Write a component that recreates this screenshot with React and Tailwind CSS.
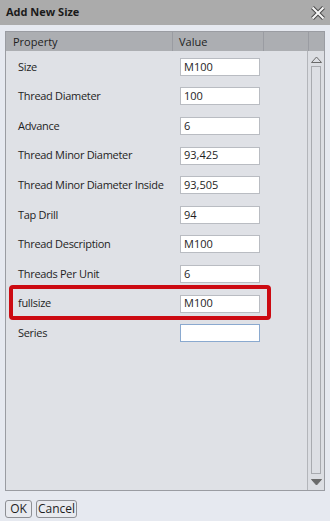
import React from "react";

const rows = [
  { label: "Size", value: "M100" },
  { label: "Thread Diameter", value: "100" },
  { label: "Advance", value: "6" },
  { label: "Thread Minor Diameter", value: "93,425" },
  { label: "Thread Minor Diameter Inside", value: "93,505" },
  { label: "Tap Drill", value: "94" },
  { label: "Thread Description", value: "M100" },
  { label: "Threads Per Unit", value: "6" },
  { label: "fullsize", value: "M100", highlight: true },
  { label: "Series", value: "", focused: true },
];

const Row = ({ label, value, highlight, focused }) => (
  <div className="relative flex h-[29.6px] items-center">
    {highlight && (
      <div className="absolute left-[3px] right-[36px] top-[-4px] bottom-[-2px] rounded-[4px] border-[4px] border-[#cc0a12]" />
    )}
    <div className="w-[174px] whitespace-nowrap pl-[12px] tracking-[-0.3px] text-[#1e1e1e]">{label}</div>
    <div
      className={
        "flex h-[18px] w-[80px] items-center bg-white pl-[3px] text-[#1e1e1e] border " +
        (focused ? "border-[#8aa9cf]" : "border-[#b9bcc2]")
      }
    >
      {value}
    </div>
  </div>
);

export default function App() {
  return (
    <div
      className="flex h-[521px] w-[330px] flex-col bg-[#e6e9f0] text-[11px]"
      style={{ fontFamily: '"Segoe UI", "Open Sans", "Noto Sans", sans-serif' }}
    >
      {/* title bar */}
      <div className="flex h-[25px] items-center justify-between bg-[#ababab] pl-[6px] pr-[4px]">
        <span className="text-[11px] font-bold text-[#1a1a1a]">Add New Size</span>
        <svg width="16" height="16" viewBox="0 0 16 16">
          <path d="M2.5 2.5 L13.5 13.5 M13.5 2.5 L2.5 13.5" stroke="#4a4a4a" strokeWidth="4" />
          <path d="M2.5 2.5 L13.5 13.5 M13.5 2.5 L2.5 13.5" stroke="#f6f6f6" strokeWidth="2" />
        </svg>
      </div>

      {/* grid panel */}
      <div className="mx-[5px] mt-[6px] flex h-[460px] flex-col border border-[#9a9ca2] bg-[#dfe1e6]">
        <div className="flex h-[19px] bg-[#acaeb2] text-[#1e1e1e]">
          <div className="w-[167px] border-r border-[#9a9ca2] pl-[7px] leading-[19px]">Property</div>
          <div className="w-[91px] border-r border-[#9a9ca2] pl-[6px] leading-[19px]">Value</div>
          <div className="w-[45px] border-r border-[#9a9ca2]" />
          <div className="flex-1" />
        </div>
        <div className="flex flex-1">
          <div className="flex-1 pt-[1px]">
            {rows.map((r) => (
              <Row key={r.label} {...r} />
            ))}
          </div>
          {/* scrollbar */}
          <div className="flex w-[17px] flex-col items-center border-l border-[#b3b5ba] bg-[#dcdee3]">
            <svg width="11" height="7" viewBox="0 0 11 7" className="mt-[5px]">
              <path d="M0.5 6.5 L5.5 1 L10.5 6.5 Z" fill="none" stroke="#6a6a6a" />
            </svg>
            <div className="mt-[3px] w-[10px] flex-1 border border-[#a8aaaf] bg-[#dddfe4]" />
            <svg width="11" height="7" viewBox="0 0 11 7" className="mb-[4px] mt-[5px]">
              <path d="M0.5 0.5 L5.5 6 L10.5 0.5 Z" fill="#6a6a6a" stroke="#6a6a6a" />
            </svg>
          </div>
        </div>
      </div>

      {/* buttons */}
      <div className="mt-[9px] flex gap-[4px] pl-[5px]">
        <button className="h-[18px] w-[27px] rounded-[3px] border border-[#8d8f94] bg-[#e8eaef] text-[12px] leading-[16px] text-[#1e1e1e]">
          OK
        </button>
        <button className="h-[18px] w-[41px] rounded-[3px] border border-[#8d8f94] bg-[#e8eaef] text-[12px] leading-[16px] text-[#1e1e1e]">
          Cancel
        </button>
      </div>
    </div>
  );
}
